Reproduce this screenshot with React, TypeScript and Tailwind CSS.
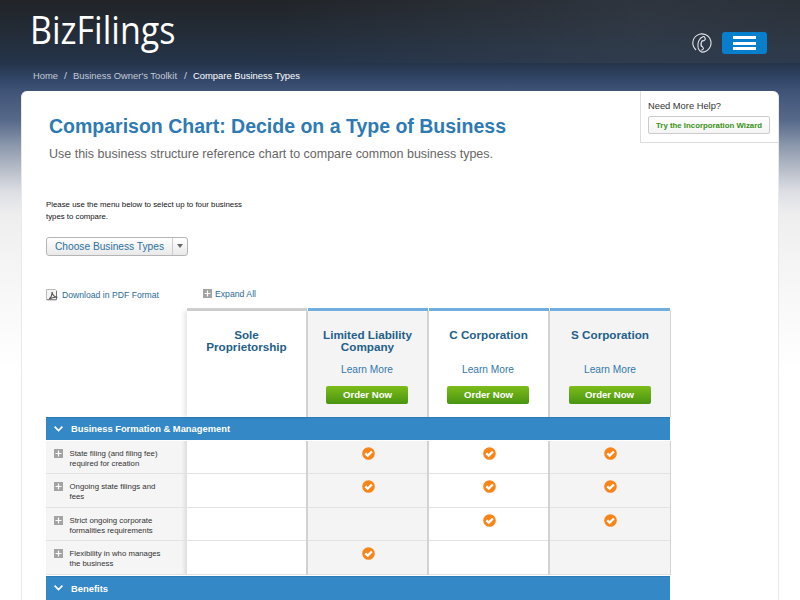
import { clsx } from 'clsx'
import { ReactNode } from 'react'

const columns = [
  { name: ['Sole', 'Proprietorship'], order: false },
  { name: ['Limited Liability', 'Company'], order: true },
  { name: ['C Corporation'], order: true },
  { name: ['S Corporation'], order: true },
]

const rows = [
  { label: ['State filing (and filing fee)', 'required for creation'], checks: [false, true, true, true] },
  { label: ['Ongoing state filings and', 'fees'], checks: [false, true, true, true] },
  { label: ['Strict ongoing corporate', 'formalities requirements'], checks: [false, false, true, true] },
  { label: ['Flexibility in who manages', 'the business'], checks: [false, true, false, false] },
]

// fits a line of text to a fixed width
function Line({ text, width, size, className }: { text: string; width: number; size: number; className?: string }) {
  return (
    <svg width={width} height={size + 6} className={clsx('block shrink-0 overflow-visible', className)}>
      <text x="0" y={size} fontSize={size} fill="currentColor" textLength={width} lengthAdjust="spacingAndGlyphs">
        {text}
      </text>
    </svg>
  )
}

function PlusBox() {
  return (
    <svg width="9" height="9" viewBox="0 0 9 9" className="block shrink-0">
      <rect width="9" height="9" fill="#a3a3a3" />
      <path d="M4.5 1.5v6M1.5 4.5h6" stroke="#fff" strokeWidth="1.2" />
    </svg>
  )
}

function Check() {
  return (
    <svg width="13" height="13" viewBox="0 0 13 13" className="block">
      <circle cx="6.5" cy="6.5" r="6.3" fill="#f8851a" />
      <path d="M3.3 6.4l2.4 2.2 4.2-4.1" fill="none" stroke="#fff" strokeWidth="2.3" />
    </svg>
  )
}

function PhoneIcon() {
  return (
    <svg width="20" height="20" viewBox="0 0 20 20" fill="none" stroke="#e2e5ea" className="block">
      <path d="M4.1 17A9.1 9.1 0 1 1 9.6 19.1c-1.6-.5-2.8-2-3.5-4.2" strokeWidth="1.1" />
      <path
        d="M6.1 14.9c-.9-4.6.6-9.6 5.2-11.3.6-.2 1 0 1.2.5l.8 1.7c.2.5 0 .9-.5 1.2l-1.3.8c-.5.3-.9.2-1.2-.2-1.4 1.7-1.6 3.8-1 5.8.5-.3 1-.2 1.2.3l.8 1.4c.2.5.1.9-.3 1.2l-1.7 1.1"
        strokeWidth="1.1"
        strokeLinejoin="round"
      />
    </svg>
  )
}

function PdfIcon() {
  return (
    <svg width="12" height="12" viewBox="0 0 12 12" fill="none" className="block">
      <path d="M.5.5h9l1 1v9H.5z" fill="#f4f4f4" stroke="#bbb" />
      <path d="M10.5 2v8.8H.7" stroke="#777" />
      <path d="M3.2 10c1.8-1.6 2.9-4 2.8-7.1.4 3.3 2.2 5 5.4 5.5-2.9-.3-5.6.2-8.2 1.6z" stroke="#555" strokeWidth="1.1" />
    </svg>
  )
}

function SectionBar({ children, className }: { children: ReactNode; className: string }) {
  return (
    <div className={clsx('flex items-center border-t border-[#2b7cb6] bg-[#3488c5] pl-2 text-white', className)}>
      <svg width="9" height="6" viewBox="0 0 9 6" fill="none" className="mr-2">
        <path d="M.6.7l3.9 3.9L8.4.7" stroke="#fff" strokeWidth="1.7" />
      </svg>
      {children}
    </div>
  )
}

// the divider sits in the right edge of every column
function columnStyle(i: number) {
  return clsx(
    'w-[121px]',
    i === 3 ? 'border-r border-[#d2d2d2]' : 'border-r-2 border-[#d2d2d2]',
    i % 2 ? 'bg-[#f4f4f4]' : 'bg-white'
  )
}

export default function App() {
  return (
    <div className="h-[600px] w-[800px] overflow-hidden bg-white bg-[linear-gradient(to_bottom,#253449_63px,#324769_80px,#405478_92px,#56698a_120px,#8a97ab_145px,#b8bec9_170px,#dddfe4_192px,#eeeeef_215px,#f4f4f4_260px,#fff_370px)] font-['Liberation_Sans',Arial,sans-serif]">
      {/* Header */}
      <header className="flex h-[63px] justify-between bg-[linear-gradient(to_right,transparent_35%,#3b455380_80%,#3c465460),linear-gradient(#222428,#232b35_28px,#25344a)] pl-8 pr-[33px]">
        <svg width="143" height="56" className="block overflow-visible font-['Open_Sans',sans-serif]">
          <text x="-2" y="43.5" fontSize="38" fill="#fff" textLength="145.5" lengthAdjust="spacingAndGlyphs">
            BizFilings
          </text>
        </svg>
        <div className="flex items-start gap-[10px] pt-8">
          <div className="pt-px">
            <PhoneIcon />
          </div>
          <button className="flex h-[22px] w-[45px] flex-col items-center justify-center gap-[2.5px] rounded-[3px] bg-[#087fcc]">
            <span className="h-[3px] w-[23px] bg-white" />
            <span className="h-[3px] w-[23px] bg-white" />
            <span className="h-[3px] w-[23px] bg-white" />
          </button>
        </div>
      </header>

      {/* Breadcrumb */}
      <nav className="flex h-7 pl-[33px] pt-[7px] text-[#c3cad5]">
        <Line text="Home" width={25} size={9.3} />
        <Line text="/" width={3} size={9.3} className="ml-[6px]" />
        <Line text="Business Owner's Toolkit" width={104} size={9.3} className="ml-[6px]" />
        <Line text="/" width={3} size={9.3} className="ml-[7px]" />
        <Line text="Compare Business Types" width={107} size={9.3} className="ml-[6px] text-white" />
      </nav>

      <main className="ml-[21px] flex h-[509px] w-[758px] justify-between rounded-t-[6px] border-x border-[#e8e9ed] bg-white">
        <div className="w-[600px] shrink-0 pl-6">
          <div className="pl-[3px] pt-[22px]">
            <h1 className="text-[#2e7ab3]">
              <Line text="Comparison Chart: Decide on a Type of Business" width={457} size={20} className="font-bold" />
            </h1>
            <Line text="Use this business structure reference chart to compare common business types." width={444} size={13} className="mt-[6px] text-[#666]" />
          </div>

          <div className="mt-[35px] text-[#111]">
            <Line text="Please use the menu below to select up to four business" width={196} size={7.8} />
            <Line text="types to compare." width={62} size={7.8} className="-mt-[2px]" />
          </div>

          <button className="mt-[12px] flex h-[19px] w-[142px] rounded-[3px] border border-[#b5b5b5] bg-linear-to-b from-white to-[#e9e9e9] text-[#2d71a0]">
            <Line text="Choose Business Types" width={109} size={10.3} className="ml-2 mt-[2px]" />
            <span className="ml-auto flex h-full w-[15px] items-center justify-center border-l border-[#ccc]">
              <svg width="6" height="4" viewBox="0 0 6 4">
                <path d="M0 0h6L3 4z" fill="#666" />
              </svg>
            </span>
          </button>

          <div className="mt-8 flex h-5 text-[#2d6b94]">
            <div className="pt-[1px]">
              <PdfIcon />
            </div>
            <Line text="Download in PDF Format" width={97} size={8.8} className="ml-[3.5px] mt-[1px]" />
            <div className="ml-[44.5px] pt-px">
              <PlusBox />
            </div>
            <Line text="Expand All" width={41} size={8.8} className="ml-[3px]" />
          </div>

          {/* Comparison table */}
          <div className="w-[624px]">
            <div className="flex h-[109px] pl-[141px]">
              {columns.map((col, i) => (
                <div key={i} className="flex w-[121px] shrink-0 flex-col">
                  <div className={clsx('h-[3px] w-[119.5px]', i === 0 ? 'bg-[#d2d2d2]' : 'bg-[#70aee0]')} />
                  <div className={clsx('grow', columnStyle(i), i === 0 && 'shadow-[-3px_0_4px_#00000018]')}>
                    <h2 className="mt-[18px] h-[33px] text-center text-[11.7px] font-bold leading-[12.6px] text-[#245f8a]">
                      {col.name.map(part => (
                        <span key={part} className="block whitespace-nowrap">{part}</span>
                      ))}
                    </h2>
                    {col.order && (
                      <div className="flex flex-col items-center pr-px text-[#3478aa]">
                        <Line text="Learn More" width={52} size={10.2} className="mt-px" />
                        <button className="mt-[7px] flex h-[18px] w-[82px] justify-center rounded-[2px] bg-linear-to-b from-[#7dbd19] to-[#489412] text-white">
                          <Line text="Order Now" width={49} size={9.5} className="mt-[2.5px] font-bold" />
                        </button>
                      </div>
                    )}
                  </div>
                </div>
              ))}
            </div>

            <SectionBar className="h-[23px]">
              <Line text="Business Formation & Management" width={159} size={9.5} className="mt-[3px] font-bold" />
            </SectionBar>
            <div className="h-px bg-white" />
            {rows.map((row, r) => (
              <div key={r} className="flex h-[33.6px]">
                <div className="flex w-[141px] shrink-0 border-b border-[#e3e3e3] bg-[linear-gradient(to_right,#f5f5f5_96%,#dedede)] pl-2 pt-[8px]">
                  <PlusBox />
                  <div className="ml-[6.5px] text-[7.8px] leading-[10px] text-[#333]">
                    {row.label.map(part => (
                      <span key={part} className="block whitespace-nowrap">{part}</span>
                    ))}
                  </div>
                </div>
                {row.checks.map((on, i) => (
                  <div key={i} className={clsx('flex shrink-0 flex-col', columnStyle(i))}>
                    <div className={clsx('flex h-full justify-center border-b border-[#e3e3e3] pt-[6px]', i < 3 && 'pl-px')}>
                      {on && <Check />}
                    </div>
                  </div>
                ))}
              </div>
            ))}
            <div className="h-px bg-white" />
            <SectionBar className="h-[25px] pb-px">
              <Line text="Benefits" width={37} size={9.5} className="mt-[3px] font-bold" />
            </SectionBar>
          </div>
        </div>

        {/* Help box */}
        <aside className="h-[52px] w-[138px] shrink-0 border-b border-l border-[#ddd] pl-[7px] pt-[8px]">
          <Line text="Need More Help?" width={73} size={9.3} className="mt-[0.5px] text-[#333]" />
          <button className="mt-[1.5px] flex h-[18px] w-[122px] justify-center rounded-[2px] border border-[#ccc] bg-linear-to-b from-white to-[#f4f4f4] text-[#3b9118]">
            <Line text="Try the Incorporation Wizard" width={106} size={7.8} className="mt-[3px] font-bold" />
          </button>
        </aside>
      </main>
    </div>
  )
}
